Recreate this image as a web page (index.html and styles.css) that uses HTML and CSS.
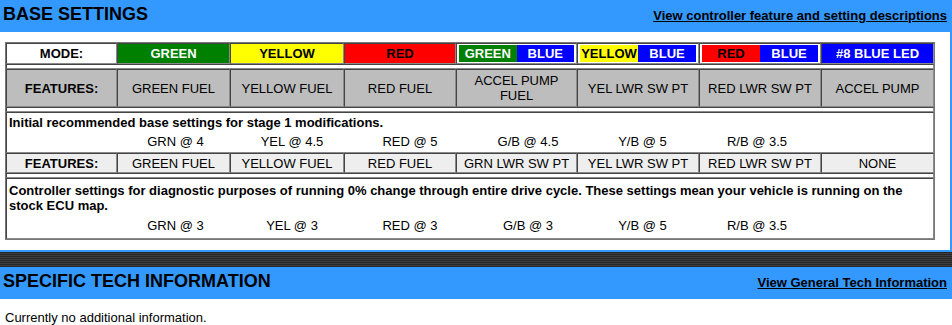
FILE: index.html
```html
<!DOCTYPE html>
<html lang="en">
<head>
<meta charset="utf-8">
<title>Base Settings</title>
<link rel="stylesheet" href="styles.css">
</head>
<body>
<div class="section-head">
  <h2 class="section-title">BASE SETTINGS</h2>
  <a class="section-link" href="#">View controller feature and setting descriptions</a>
</div>
<div class="section-body">
  <div class="settings">
    <div class="row row-mode">
      <div class="cell label cell-white">MODE:</div>
      <div class="cell bg-green">GREEN</div>
      <div class="cell bg-yellow">YELLOW</div>
      <div class="cell bg-red">RED</div>
      <div class="cell split cell-white"><span class="half bg-green">GREEN</span><span class="half bg-blue">BLUE</span></div>
      <div class="cell split cell-white"><span class="half bg-yellow">YELLOW</span><span class="half bg-blue">BLUE</span></div>
      <div class="cell split cell-white"><span class="half bg-red">RED</span><span class="half bg-blue">BLUE</span></div>
      <div class="cell bg-blue">#8 BLUE LED</div>
    </div>
    <div class="spacer"></div>
    <div class="row row-feat">
      <div class="cell label">FEATURES:</div>
      <div class="cell">GREEN FUEL</div>
      <div class="cell">YELLOW FUEL</div>
      <div class="cell">RED FUEL</div>
      <div class="cell">ACCEL PUMP FUEL</div>
      <div class="cell">YEL LWR SW PT</div>
      <div class="cell">RED LWR SW PT</div>
      <div class="cell">ACCEL PUMP</div>
    </div>
    <div class="spacer"></div>
    <div class="note note-short">
      <p class="note-text">Initial recommended base settings for stage 1 modifications.</p>
      <div class="values">
        <span></span><span>GRN @ 4</span><span>YEL @ 4.5</span><span>RED @ 5</span><span>G/B @ 4.5</span><span>Y/B @ 5</span><span>R/B @ 3.5</span>
      </div>
    </div>
    <div class="row row-feat2">
      <div class="cell label">FEATURES:</div>
      <div class="cell">GREEN FUEL</div>
      <div class="cell">YELLOW FUEL</div>
      <div class="cell">RED FUEL</div>
      <div class="cell">GRN LWR SW PT</div>
      <div class="cell">YEL LWR SW PT</div>
      <div class="cell">RED LWR SW PT</div>
      <div class="cell">NONE</div>
    </div>
    <div class="spacer"></div>
    <div class="note note-tall">
      <p class="note-text">Controller settings for diagnostic purposes of running 0% change through entire drive cycle. These settings mean your vehicle is running on the stock ECU map.</p>
      <div class="values values-wide">
        <span></span><span>GRN @ 3</span><span>YEL @ 3</span><span>RED @ 3</span><span>G/B @ 3</span><span>Y/B @ 5</span><span>R/B @ 3.5</span>
      </div>
    </div>
  </div>
</div>
<div class="divider"></div>
<div class="section-head">
  <h2 class="section-title">SPECIFIC TECH INFORMATION</h2>
  <a class="section-link" href="#">View General Tech Information</a>
</div>
<p class="info">Currently no additional information.</p>
</body>
</html>
```

FILE: styles.css
```css
html, body {
  margin: 0;
  padding: 0;
  background: #ffffff;
}

body {
  font-family: "Liberation Sans", Arial, Helvetica, sans-serif;
  font-size: 13px;
  color: #000000;
  width: 952px;
}

.section-head {
  box-sizing: border-box;
  height: 32px;
  background: #3399ff;
  display: flex;
  justify-content: space-between;
  align-items: baseline;
  padding: 3px 5px 0 3px;
}

.section-title {
  margin: 0;
  font-size: 18px;
  line-height: 22px;
  font-weight: bold;
  color: #000;
}

.section-link {
  font-size: 13px;
  line-height: 15px;
  font-weight: bold;
  color: #000;
  text-decoration: underline;
}

.section-body {
  padding: 10px 0 10px 5px;
  border-right: 2px solid #3399ff;
  border-bottom: 2px solid #3399ff;
}

.settings {
  box-sizing: border-box;
  width: 930px;
  border: 1px solid #777777;
  background: #ffffff;
}

.row {
  display: grid;
  grid-template-columns: 111px 113px 114px 112px 121px 122px 122px 113px;
}

.cell {
  box-sizing: border-box;
  border: 1px solid;
  border-color: #444444 #8a8a8a #8a8a8a #444444;
  display: flex;
  align-items: center;
  justify-content: center;
  text-align: center;
  line-height: 15px;
  padding: 0 4px;
}

.label {
  font-weight: bold;
}

.row-mode .cell {
  height: 21px;
  font-weight: bold;
}

.cell-white {
  background: #ffffff;
}

.split {
  padding: 1px 2px;
  align-items: stretch;
}

.half {
  flex: 1 1 0;
  display: flex;
  align-items: center;
  justify-content: center;
}

.bg-green {
  background: #008000;
  color: #ffffff;
}

.bg-yellow {
  background: #ffff00;
  color: #000000;
}

.bg-red {
  background: #ff0000;
  color: #000000;
}

.bg-blue {
  background: #0000ff;
  color: #ffffff;
}

.spacer {
  box-sizing: border-box;
  height: 5px;
  border: 1px solid;
  border-color: #444444 #8a8a8a #8a8a8a #444444;
}

.row-feat .cell {
  height: 38px;
  background: #bdbdbd;
}

.row-feat2 .cell {
  height: 20px;
  background: #eeeeee;
}

.note {
  box-sizing: border-box;
  border: 1px solid;
  border-color: #444444 #8a8a8a #8a8a8a #444444;
  padding: 2px 2px 0 2px;
}

.note-short {
  height: 41px;
}

.note-tall {
  height: 61px;
  padding-top: 4px;
}

.note-text {
  margin: 0;
  font-weight: bold;
  line-height: 15px;
}

.values {
  display: grid;
  grid-template-columns: 108px 117px 116px 120px 116px 113px 116px;
  text-align: center;
  line-height: 15px;
  margin-top: 4px;
}

.values-wide {
  margin-top: 5px;
}

.divider {
  height: 15px;
  background: repeating-linear-gradient(to bottom, #262626 0, #262626 1px, #3e3e3e 1px, #3e3e3e 2px);
}

.info {
  margin: 0;
  padding: 11px 5px 0 5px;
  line-height: 15px;
  font-size: 13px;
}
```
